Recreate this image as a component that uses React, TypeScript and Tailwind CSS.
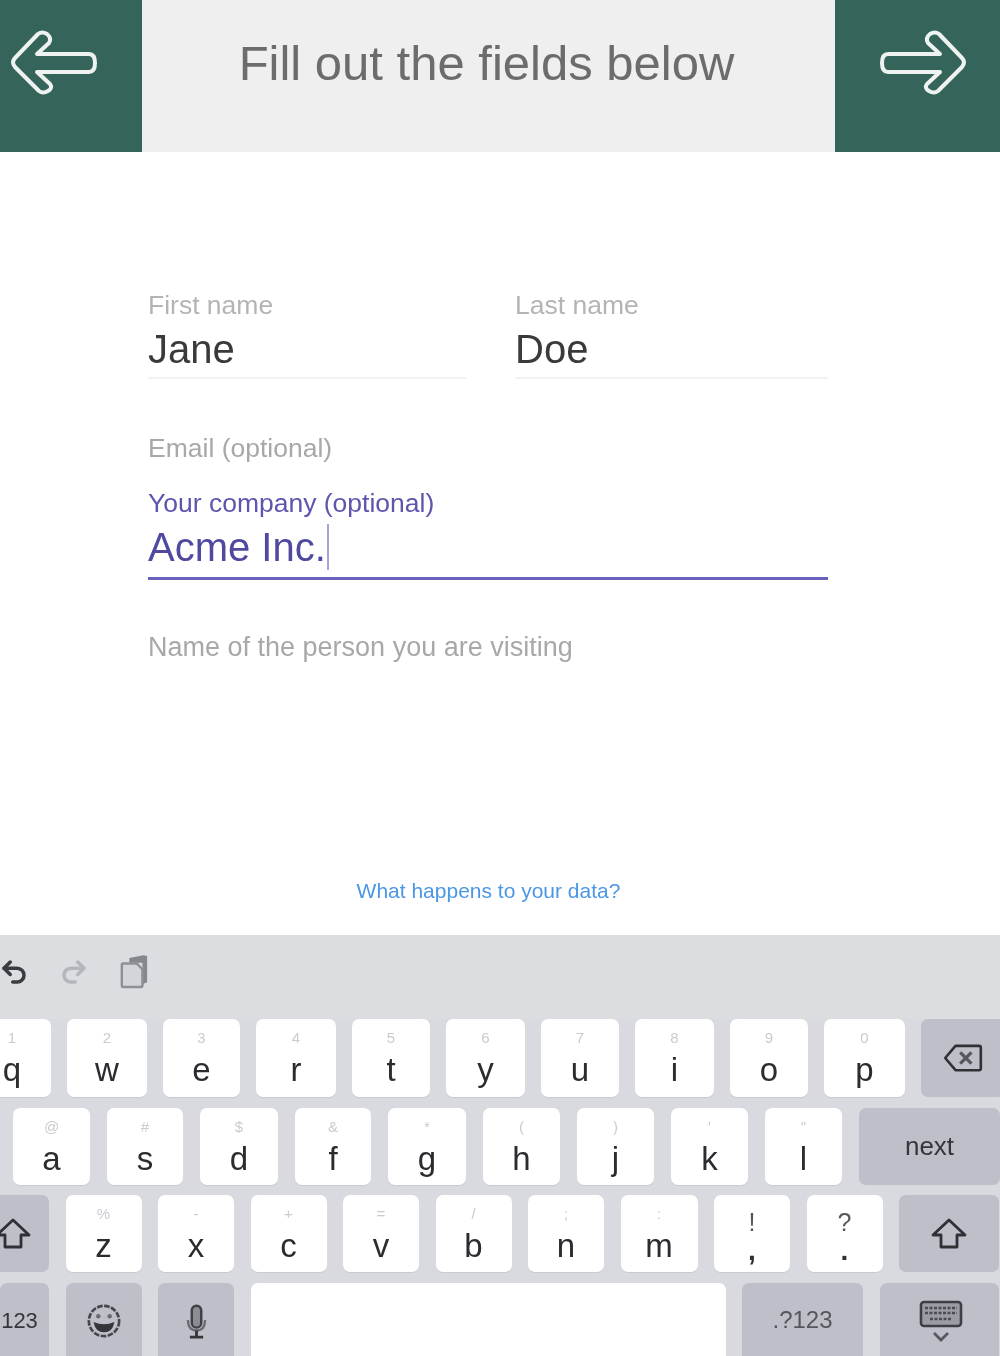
import { ReactNode } from 'react'
import { Undo2, Redo2 } from 'lucide-react'

const ARROW = 'M38 34 Q42 31 47 34 Q52 38 49 43 L37 54 L89 54 Q95 54 95 63 Q95 72 89 72 L37 72 L50 84 Q53 88 48 91 Q43 94 39 91 L15 67 Q11 62 15 58 Z'

function ArrowIcon({ flip }: { flip?: boolean }) {
  return (
    <svg viewBox="0 0 105 126" className={`h-[126px] w-[105px] ${flip ? '-scale-x-100' : ''}`} fill="none">
      <path d={ARROW} stroke="#eef3f1" strokeWidth="4" strokeLinejoin="round" />
    </svg>
  )
}

function ShiftIcon() {
  return (
    <svg viewBox="0 0 36 32" className="h-[32px] w-[36px]" fill="none">
      <path d="M18 2 L34 17 L26 17 L26 29 L10 29 L10 17 L2 17 Z" stroke="#2f3135" strokeWidth="2.8" strokeLinejoin="round" />
    </svg>
  )
}

function DeleteIcon() {
  return (
    <svg viewBox="0 0 42 32" className="h-[30px] w-[40px]" fill="none">
      <path d="M13 3 L38 3 Q40 3 40 5 L40 27 Q40 29 38 29 L13 29 L2 16 Z" stroke="#2f3135" strokeWidth="2.8" strokeLinejoin="round" />
      <path d="M18 10 L30 22 M30 10 L18 22" stroke="#55585e" strokeWidth="3.4" />
    </svg>
  )
}

function EmojiIcon() {
  return (
    <svg viewBox="0 0 38 38" className="h-[36px] w-[36px]" fill="none">
      <circle cx="19" cy="19" r="16" stroke="#45474c" strokeWidth="2.8" strokeDasharray="6 1.5" />
      <circle cx="13" cy="14" r="2.4" fill="#6a6c72" />
      <circle cx="25" cy="14" r="2.4" fill="#6a6c72" />
      <path d="M8 20 Q19 25 30 20 Q28 31 19 31 Q10 31 8 20 Z" fill="#34363a" />
    </svg>
  )
}

function MicIcon() {
  return (
    <svg viewBox="0 0 24 38" className="h-[36px] w-[23px]" fill="none">
      <rect x="7" y="3" width="10" height="23" rx="5" fill="#8b8d93" stroke="#3f4146" strokeWidth="2.6" />
      <path d="M3 18 Q3 29 12 29 Q21 29 21 18" stroke="#6a6c72" strokeWidth="2.4" />
      <path d="M12 29 L12 35 M5 36 L19 36" stroke="#34363a" strokeWidth="3" />
    </svg>
  )
}

function KeyboardIcon() {
  return (
    <svg viewBox="0 0 44 44" className="h-[44px] w-[44px]" fill="none">
      <rect x="2" y="2" width="40" height="24" rx="3" fill="#9b9da4" stroke="#3d3f44" strokeWidth="2.6" />
      <path d="M6 8 H38 M6 13 H38 M11 19 H33" stroke="#4a4c51" strokeWidth="2.4" strokeDasharray="3 1.5" />
      <path d="M15 33 L22 40 L29 33" stroke="#55585e" strokeWidth="2.8" />
    </svg>
  )
}

function ClipboardIcon() {
  return (
    <svg viewBox="0 0 32 36" className="h-[36px] w-[30px]" fill="none">
      <path d="M11 3 L26 0 L30 1 L30 29 L25 31 L25 8 L11 8 Z" fill="#85878d" />
      <path d="M4 9 H19 L25 15 V33 Q25 34 24 34 H4 Q3 34 3 33 V10 Q3 9 4 9 Z" fill="#d4d5da" stroke="#8e9096" strokeWidth="2.6" />
    </svg>
  )
}

function Key({ label, sub, width }: { label: string; sub: string; width: string }) {
  return (
    <div className={`${width} flex h-full shrink-0 flex-col items-center rounded-[7px] bg-white pt-[10px] shadow-[0_1px_0_#c9cad0]`}>
      <span className="h-[18px] text-[15px] leading-[18px] text-[#c9cbd0]">{sub}</span>
      <span className="mt-[4px] text-[33px] leading-[38px] text-[#2a2c2f]">{label}</span>
    </div>
  )
}

function PuncKey({ top, bottom }: { top: string; bottom: string }) {
  return (
    <div className="flex h-full w-[76px] shrink-0 flex-col items-center rounded-[7px] bg-white pt-[12px] shadow-[0_1px_0_#c9cad0]">
      <span className="h-[30px] text-[25px] leading-[30px] text-[#55575b]">{top}</span>
      <span className="text-[28px] leading-[28px] font-bold text-[#2e3033]">{bottom}</span>
    </div>
  )
}

function FnKey({ width, className = '', children }: { width: string; className?: string; children: ReactNode }) {
  return (
    <div className={`${width} ${className} flex h-full shrink-0 items-center justify-center rounded-[7px] bg-[#bdc0c9] text-[#34363a]`}>
      {children}
    </div>
  )
}

const row1 = [
  ['q', '1', 'w-[78px]'], ['w', '2', 'w-[80px]'], ['e', '3', 'w-[77px]'], ['r', '4', 'w-[80px]'], ['t', '5', 'w-[78px]'],
  ['y', '6', 'w-[79px]'], ['u', '7', 'w-[78px]'], ['i', '8', 'w-[79px]'], ['o', '9', 'w-[78px]'], ['p', '0', 'w-[81px]'],
]
const row2 = [
  ['a', '@', 'w-[77px]'], ['s', '#', 'w-[76px]'], ['d', '$', 'w-[78px]'], ['f', '&', 'w-[76px]'], ['g', '*', 'w-[78px]'],
  ['h', '(', 'w-[77px]'], ['j', ')', 'w-[77px]'], ['k', "'", 'w-[77px]'], ['l', '"', 'w-[77px]'],
]
const row3 = [
  ['z', '%', 'w-[76px]'], ['x', '-', 'w-[76px]'], ['c', '+', 'w-[76px]'], ['v', '=', 'w-[76px]'], ['b', '/', 'w-[76px]'],
  ['n', ';', 'w-[76px]'], ['m', ':', 'w-[77px]'],
]

export default function App() {
  return (
    <div className="flex h-[1356px] w-[1000px] flex-col overflow-hidden bg-white font-['Liberation_Sans',Arial,sans-serif] blur-[0.6px]">
      <header className="flex h-[152px] shrink-0 bg-[#efefef]">
        <div className="w-[142px] bg-[#35655a]"><ArrowIcon /></div>
        <h1 className="flex-1 pt-[36px] pr-[4px] text-center text-[49px] leading-[54px] text-[#6c6c6c]">Fill out the fields below</h1>
        <div className="flex w-[165px] justify-end bg-[#35655a] pr-[23px]"><ArrowIcon flip /></div>
      </header>

      <main className="flex h-[783px] shrink-0 flex-col pt-[139px] pl-[148px]">
        <div className="flex gap-[49px]">
          <div className="w-[318px]">
            <div className="text-[26.5px] leading-[28px] text-[#b4b4b4]">First name</div>
            <div className="mt-[7px] text-[40px] leading-[46px] text-[#3a3a3a]">Jane</div>
            <div className="mt-[5px] h-[2px] bg-[#f2f2f2]" />
          </div>
          <div className="w-[313px]">
            <div className="text-[26.5px] leading-[28px] text-[#b4b4b4]">Last name</div>
            <div className="mt-[7px] text-[40px] leading-[46px] text-[#3a3a3a]">Doe</div>
            <div className="mt-[5px] h-[2px] bg-[#f2f2f2]" />
          </div>
        </div>

        <div className="mt-[55px] text-[26.5px] leading-[28px] text-[#a8a8a8]">Email (optional)</div>

        <div className="mt-[27px] w-[680px]">
          <div className="text-[26.5px] leading-[28px] text-[#5c56ad]">Your company (optional)</div>
          <div className="mt-[7px] flex h-[46px] items-center text-[40px] leading-[46px] text-[#4f499f]">
            Acme Inc.
            <span className="ml-[1px] h-[46px] w-[2px] bg-[#a7a4da]" />
          </div>
          <div className="mt-[7px] h-[3px] bg-[#6a63bb]" />
        </div>

        <div className="mt-[53px] text-[27px] leading-[28px] text-[#a8a8a8]">Name of the person you are visiting</div>

        <a className="mt-[218px] pr-[171px] text-center text-[21px] leading-[24px] text-[#4a97e6]">What happens to your data?</a>
      </main>

      <section className="flex-1 overflow-hidden bg-[#d9dadf]">
        <div className="flex h-[84px] items-center gap-[30px] bg-[#dcdde1] pb-[11px]">
          <Undo2 className="-ml-[1px] h-[30px] w-[30px] text-[#3a3c40]" strokeWidth={2.8} />
          <Redo2 className="h-[30px] w-[30px] text-[#b4b6bb]" strokeWidth={2.8} />
          <ClipboardIcon />
        </div>

        <div className="-ml-[27px] flex h-[78px] gap-[16px]">
          {row1.map(([label, sub, width]) => <Key key={label} label={label} sub={sub} width={width} />)}
          <FnKey width="w-[84px]"><DeleteIcon /></FnKey>
        </div>

        <div className="mt-[11px] ml-[13px] flex h-[77px] gap-[17px]">
          {row2.map(([label, sub, width]) => <Key key={label} label={label} sub={sub} width={width} />)}
          <FnKey width="w-[141px]"><span className="text-[26px]">next</span></FnKey>
        </div>

        <div className="mt-[10px] -ml-[23px] flex h-[77px] gap-[16.5px]">
          <FnKey width="w-[72px]"><ShiftIcon /></FnKey>
          {row3.map(([label, sub, width]) => <Key key={label} label={label} sub={sub} width={width} />)}
          <PuncKey top="!" bottom="," />
          <PuncKey top="?" bottom="." />
          <FnKey width="w-[100px]"><ShiftIcon /></FnKey>
        </div>

        <div className="mt-[11px] flex h-[80px] gap-[16.5px]">
          <FnKey width="w-[49px]" className="pr-[10px] pb-[6px]"><span className="text-[22px]">123</span></FnKey>
          <FnKey width="w-[76px]" className="pb-[5px]"><EmojiIcon /></FnKey>
          <FnKey width="w-[76px]" className="pb-[5px]"><MicIcon /></FnKey>
          <div className="h-full w-[475px] shrink-0 rounded-[7px] bg-white" />
          <FnKey width="w-[121px]" className="pb-[6px]"><span className="text-[24px] text-[#55575b]">.?123</span></FnKey>
          <FnKey width="w-[119px]" className="pb-[2px] pl-[3px]"><KeyboardIcon /></FnKey>
        </div>
      </section>
    </div>
  )
}
